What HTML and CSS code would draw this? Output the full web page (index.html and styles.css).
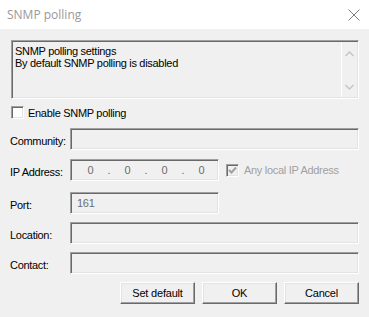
FILE: index.html
```html
<!DOCTYPE html>
<html>
<head>
<meta charset="utf-8">
<link rel="stylesheet" href="styles.css">
</head>
<body>
<div class="dialog">
  <div class="titlebar">
    <span class="title">SNMP polling</span>
    <svg class="close" width="12" height="12" viewBox="0 0 12 12"><path d="M0.5 0.5 L11.5 11.5 M11.5 0.5 L0.5 11.5" stroke="#808080" stroke-width="1" fill="none"/></svg>
  </div>
  <div class="content">
    <div class="memo">
      <div class="memo-text">SNMP polling settings<br>By default SNMP polling is disabled</div>
      <div class="scroll">
        <svg width="9" height="6" viewBox="0 0 9 6"><path d="M0.5 5 L4.5 1 L8.5 5" stroke="#c4c4c4" stroke-width="1.4" fill="none"/></svg>
        <svg width="9" height="6" viewBox="0 0 9 6"><path d="M0.5 1 L4.5 5 L8.5 1" stroke="#c4c4c4" stroke-width="1.4" fill="none"/></svg>
      </div>
    </div>
    <label class="check-row">
      <span class="checkbox"></span>
      <span>Enable SNMP polling</span>
    </label>
    <div class="form">
      <div class="row r-community">
        <span class="label">Community:</span>
        <div class="field wide"></div>
      </div>
      <div class="row r-ip">
        <span class="label">IP Address:</span>
        <div class="field narrow ip">
          <span class="seg">0</span><span class="dot">.</span>
          <span class="seg">0</span><span class="dot">.</span>
          <span class="seg">0</span><span class="dot">.</span>
          <span class="seg">0</span>
        </div>
        <div class="any">
          <span class="checkbox disabled">
            <svg width="9" height="9" viewBox="0 0 9 9"><path d="M1 4 L3.5 6.5 L8 1.5" stroke="#a0a0a0" stroke-width="2" fill="none"/></svg>
          </span>
          <span>Any local IP Address</span>
        </div>
      </div>
      <div class="row r-port">
        <span class="label">Port:</span>
        <div class="field narrow port">161</div>
      </div>
      <div class="row r-location">
        <span class="label">Location:</span>
        <div class="field wide"></div>
      </div>
      <div class="row r-contact">
        <span class="label">Contact:</span>
        <div class="field wide"></div>
      </div>
    </div>
    <div class="buttons">
      <button class="btn">Set default</button>
      <button class="btn">OK</button>
      <button class="btn">Cancel</button>
    </div>
  </div>
</div>
</body>
</html>
```
FILE: styles.css
```css
html, body {
  margin: 0;
  padding: 0;
}
body {
  width: 369px;
  height: 317px;
  background: #f0f0f0;
  font-family: "Liberation Sans", Arial, sans-serif;
  font-size: 11px;
  letter-spacing: -0.3px;
  color: #000;
  overflow: hidden;
}
.dialog {
  width: 369px;
  height: 317px;
  display: flex;
  flex-direction: column;
}
.titlebar {
  height: 29px;
  background: #fff;
  display: flex;
  align-items: center;
  justify-content: space-between;
  padding: 0 9px 0 7px;
  box-sizing: border-box;
  flex: none;
}
.title {
  font-family: "Open Sans", "Noto Sans", sans-serif;
  font-size: 12px;
  letter-spacing: 0;
  color: #999;
  margin-top: -1px;
}
.close {
  display: block;
  margin-top: 1px;
}
.content {
  padding: 11px 10px 0 11px;
  display: flex;
  flex-direction: column;
}
.memo {
  height: 59px;
  box-sizing: border-box;
  border: 1px solid;
  border-color: #a0a0a0 #fff #fff #a0a0a0;
  box-shadow: inset 1px 1px 0 #696969, inset -1px -1px 0 #e3e3e3;
  display: flex;
}
.memo-text {
  flex: 1;
  padding: 4px 0 0 3px;
  line-height: 12px;
}
.scroll {
  width: 16px;
  border-left: 1px solid #fff;
  margin: 1px 1px 1px 0;
  display: flex;
  flex-direction: column;
  justify-content: space-between;
  align-items: center;
  padding: 9px 0 7px;
  box-sizing: border-box;
}
.scroll svg {
  display: block;
}
.check-row {
  display: flex;
  align-items: center;
  gap: 4px;
  margin-top: 7px;
  height: 13px;
}
.checkbox {
  width: 13px;
  height: 13px;
  box-sizing: border-box;
  border: 1px solid;
  border-color: #a0a0a0 #fff #fff #a0a0a0;
  box-shadow: inset 1px 1px 0 #696969, inset -1px -1px 0 #e3e3e3;
  background: #fff;
  display: flex;
  align-items: center;
  justify-content: center;
  flex: none;
}
.checkbox.disabled {
  background: #f0f0f0;
}
.checkbox svg {
  display: block;
}
.form {
  display: flex;
  flex-direction: column;
  margin-left: -1px;
}
.row {
  display: flex;
  align-items: center;
  height: 22px;
}
.r-community { margin-top: 9px; }
.r-ip { margin-top: 9px; }
.r-port { margin-top: 11px; }
.r-location { margin-top: 8px; }
.r-contact { margin-top: 8px; }
.label {
  width: 60px;
  flex: none;
  padding-top: 3px;
}
.field {
  height: 22px;
  box-sizing: border-box;
  border: 1px solid;
  border-color: #a0a0a0 #fff #fff #a0a0a0;
  box-shadow: inset 1px 1px 0 #696969, inset -1px -1px 0 #e3e3e3;
  background: #f0f0f0;
  color: #6d6d6d;
}
.wide {
  flex: 1;
}
.narrow {
  width: 149px;
}
.ip {
  display: flex;
  align-items: center;
  padding-left: 14px;
}
.seg {
  width: 11px;
  text-align: center;
}
.dot {
  width: 26px;
  text-align: center;
}
.port {
  padding: 3px 0 0 6px;
  line-height: 14px;
}
.any {
  display: flex;
  align-items: center;
  gap: 5px;
  margin-left: 7px;
  color: #a0a0a0;
}
.buttons {
  display: flex;
  justify-content: flex-end;
  gap: 7px;
  margin-top: 8px;
}
.btn {
  width: 75px;
  height: 22px;
  box-sizing: border-box;
  margin: 0;
  padding: 0;
  background: #f0f0f0;
  font-family: "Liberation Sans", Arial, sans-serif;
  font-size: 11px;
  letter-spacing: -0.2px;
  color: #000;
  border: 1px solid;
  border-color: #fff #696969 #696969 #fff;
  box-shadow: inset -1px -1px 0 #a0a0a0, inset 1px 1px 0 #e3e3e3;
}
```
